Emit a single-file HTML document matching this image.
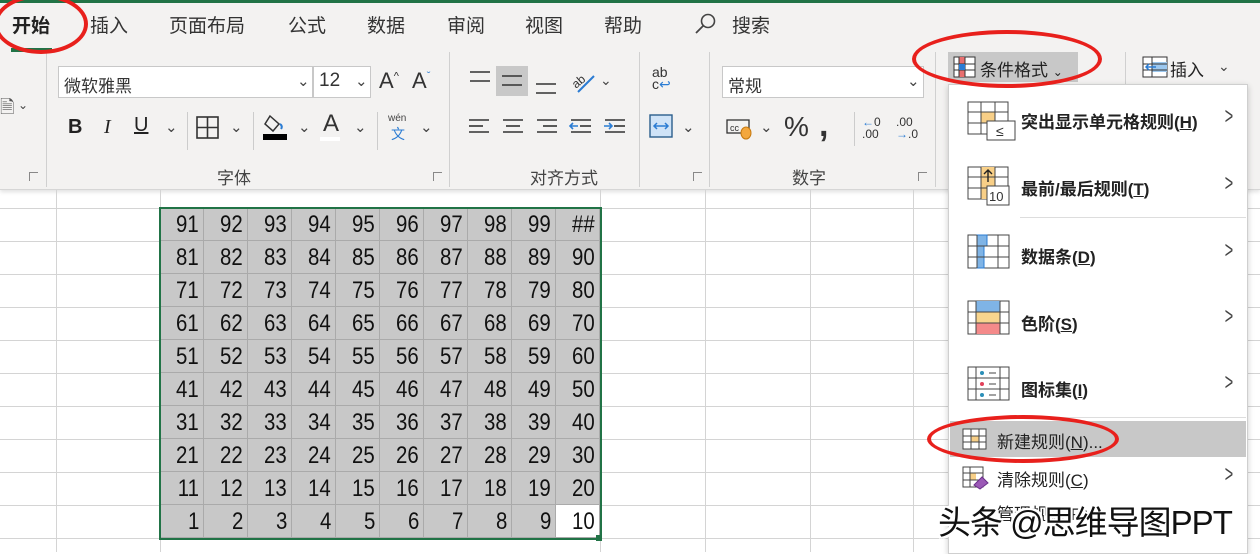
<!DOCTYPE html>
<html><head><meta charset="utf-8"><style>
*{margin:0;padding:0;box-sizing:border-box}
body{width:1260px;height:552px;overflow:hidden;background:#fff;position:relative;font-family:"Liberation Sans","Noto Sans CJK SC",sans-serif;color:#222}
.a{position:absolute;white-space:nowrap}
.rib{position:absolute;left:0;top:0;width:1260px;height:190px;background:#f3f2f1;border-bottom:1px solid #d6d6d6;box-shadow:0 2px 4px rgba(0,0,0,.12)}
.tab{position:absolute;top:11px;font-size:19px;color:#333}
.sep{position:absolute;top:52px;width:1px;height:135px;background:#d0d0d0}
.gl{position:absolute;top:164px;font-size:17px;color:#444}
.dl{position:absolute;top:172px;width:9px;height:9px;border-left:1px solid #888;border-top:1px solid #888}
.box{position:absolute;background:#fff;border:1px solid #c8c8c8;height:32px;font-size:17px;padding:5px 5px;color:#333}
.chev{position:absolute;font-size:12px;color:#444}
.vl{position:absolute;top:190px;width:1px;height:362px;background:#d4d4d4}
.hl{position:absolute;left:0;width:1260px;height:1px;background:#d4d4d4}
.cell{position:absolute;width:44px;height:33px;background:#c8c8c8;border-right:1px solid #aaa;border-bottom:1px solid #aaa;font-size:24px;text-align:right;padding-right:4px;line-height:33px;color:#111}
.cell span{display:inline-block;transform:scaleX(.85);transform-origin:right}
.menu{position:absolute;left:948px;top:84px;width:300px;height:470px;background:#fff;border:1px solid #cfcfcf;box-shadow:0 2px 6px rgba(0,0,0,.2)}
.mi{position:absolute;left:1021px;font-size:17px;font-weight:bold;color:#222}
.arr{position:absolute;left:1222px;font-size:24px;color:#444;transform:scaleX(.6)}
.ell{position:absolute;border:4px solid #e8201c;border-radius:50%}
</style></head><body>
<div class="rib"></div>
<div class="a" style="left:0;top:0;width:1260px;height:3px;background:#217346"></div>
<div class="tab" style="left:12px;font-weight:bold;color:#222">开始</div>
<div class="a" style="left:11px;top:48px;width:41px;height:4px;background:#217346"></div>
<div class="tab" style="left:90px">插入</div>
<div class="tab" style="left:169px">页面布局</div>
<div class="tab" style="left:288px">公式</div>
<div class="tab" style="left:367px">数据</div>
<div class="tab" style="left:447px">审阅</div>
<div class="tab" style="left:525px">视图</div>
<div class="tab" style="left:604px">帮助</div>
<svg class="a" style="left:694px;top:12px" width="24" height="24"><circle cx="14" cy="9" r="6.5" fill="none" stroke="#444" stroke-width="1.6"/><line x1="9.5" y1="13.5" x2="2" y2="21" stroke="#444" stroke-width="1.8"/></svg>
<div class="tab" style="left:732px">搜索</div>

<div class="sep" style="left:46px"></div><div class="sep" style="left:449px"></div><div class="sep" style="left:639px"></div><div class="sep" style="left:709px"></div><div class="sep" style="left:935px"></div><div class="sep" style="left:1125px"></div>
<div class="a" style="left:0;top:95px;font-size:18px;color:#555">🗎</div><div class="chev" style="left:18px;top:98px">⌄</div>
<div class="gl" style="left:217px">字体</div><div class="gl" style="left:530px">对齐方式</div><div class="gl" style="left:792px">数字</div>
<div class="dl" style="left:29px"></div><div class="dl" style="left:433px"></div><div class="dl" style="left:693px"></div><div class="dl" style="left:918px"></div>

<div class="box" style="left:58px;top:66px;width:255px">微软雅黑</div><div class="chev" style="left:297px;top:72px;font-size:15px">⌄</div>
<div class="box" style="left:313px;top:66px;width:58px;font-size:19px;padding-top:3px">12</div><div class="chev" style="left:355px;top:72px;font-size:15px">⌄</div>
<div class="a" style="left:379px;top:68px;font-size:22px;color:#333">A<sup style="font-size:11px">^</sup></div>
<div class="a" style="left:412px;top:68px;font-size:22px;color:#333">A<sup style="font-size:11px;color:#2b7cd3">ˇ</sup></div>
<div class="a" style="left:68px;top:116px;font-size:20px;font-weight:bold">B</div>
<div class="a" style="left:104px;top:116px;font-size:20px;font-style:italic;font-family:'Liberation Serif',serif">I</div>
<div class="a" style="left:134px;top:114px;font-size:20px;text-decoration:underline">U</div><div class="chev" style="left:165px;top:118px;font-size:15px">⌄</div>
<div class="a" style="left:187px;top:112px;width:1px;height:38px;background:#ccc"></div>
<svg class="a" style="left:196px;top:116px" width="24" height="24"><rect x="1" y="1" width="21" height="21" fill="none" stroke="#333" stroke-width="1.6"/><line x1="11.5" y1="1" x2="11.5" y2="22" stroke="#333" stroke-width="1.6"/><line x1="1" y1="11.5" x2="22" y2="11.5" stroke="#333" stroke-width="1.6"/></svg><div class="chev" style="left:230px;top:118px;font-size:15px">⌄</div>
<div class="a" style="left:253px;top:112px;width:1px;height:38px;background:#ccc"></div>
<svg class="a" style="left:262px;top:112px" width="28" height="30"><path d="M8 4 L17 12 L11 19 L3 12 Z" fill="none" stroke="#333" stroke-width="1.5"/><path d="M18 12 Q21 14 19 17" stroke="#2b7cd3" stroke-width="2" fill="none"/><rect x="1" y="22" width="24" height="6" fill="#000"/></svg><div class="chev" style="left:298px;top:118px;font-size:15px">⌄</div>
<div class="a" style="left:323px;top:110px;font-size:24px;color:#333">A</div><div class="a" style="left:320px;top:137px;width:20px;height:4px;background:#fff"></div><div class="chev" style="left:354px;top:118px;font-size:15px">⌄</div>
<div class="a" style="left:377px;top:112px;width:1px;height:38px;background:#ccc"></div>
<div class="a" style="left:388px;top:113px;font-size:10px;color:#444">wén</div><div class="a" style="left:391px;top:124px;font-size:14px;color:#2b7cd3">文</div><div class="chev" style="left:420px;top:118px;font-size:15px">⌄</div>

<svg class="a" style="left:466px;top:64px;width:170px;height:80px">
<g stroke="#333" stroke-width="1.6">
<rect x="30" y="2" width="32" height="30" fill="#c8c8c8" stroke="none"/>
<line x1="4" y1="8" x2="24" y2="8"/><line x1="4" y1="17" x2="24" y2="17"/>
<line x1="36" y1="12" x2="56" y2="12"/><line x1="36" y1="21" x2="56" y2="21"/>
<line x1="70" y1="20" x2="90" y2="20"/><line x1="70" y1="29" x2="90" y2="29"/>
<line x1="3" y1="56" x2="23" y2="56"/><line x1="3" y1="62" x2="17" y2="62"/><line x1="3" y1="68" x2="23" y2="68"/>
<line x1="37" y1="56" x2="57" y2="56"/><line x1="40" y1="62" x2="54" y2="62"/><line x1="37" y1="68" x2="57" y2="68"/>
<line x1="71" y1="56" x2="91" y2="56"/><line x1="77" y1="62" x2="91" y2="62"/><line x1="71" y1="68" x2="91" y2="68"/>
<line x1="105" y1="56" x2="125" y2="56"/><line x1="114" y1="62" x2="125" y2="62"/><line x1="105" y1="68" x2="125" y2="68"/>
<line x1="139" y1="56" x2="159" y2="56"/><line x1="148" y1="62" x2="159" y2="62"/><line x1="139" y1="68" x2="159" y2="68"/>
</g>
<path d="M104 62 h8 M107 59 l-3 3 3 3" stroke="#2b7cd3" stroke-width="1.6" fill="none"/>
<path d="M138 62 h8 M143 59 l3 3 -3 3" stroke="#2b7cd3" stroke-width="1.6" fill="none"/>
<text x="106" y="22" font-size="12" fill="#333" transform="rotate(-40 112 18)">ab</text>
<line x1="112" y1="28" x2="128" y2="12" stroke="#2b7cd3" stroke-width="2"/>
</svg><div class="chev" style="left:600px;top:72px;font-size:14px">⌄</div>
<div class="a" style="left:652px;top:66px;font-size:14px;line-height:12px;color:#333">ab<br>c<span style="color:#2b7cd3">↩</span></div>
<svg class="a" style="left:648px;top:113px" width="26" height="26"><rect x="2" y="2" width="22" height="22" fill="#cfe3f7" stroke="#2b5e8c" stroke-width="1.4"/><path d="M6 13h14M9 10l-3 3 3 3M17 10l3 3-3 3" stroke="#2b7cd3" stroke-width="1.5" fill="none"/></svg><div class="chev" style="left:682px;top:118px;font-size:15px">⌄</div>

<div class="box" style="left:722px;top:66px;width:202px">常规</div><div class="chev" style="left:907px;top:72px;font-size:15px">⌄</div>
<svg class="a" style="left:726px;top:117px" width="28" height="24"><rect x="1" y="3" width="22" height="13" fill="none" stroke="#333" stroke-width="1.3"/><text x="4" y="14" font-size="9" fill="#333">cc</text><ellipse cx="20" cy="16" rx="5" ry="6" fill="#f3a73d" stroke="#c77a10"/></svg><div class="chev" style="left:760px;top:118px;font-size:15px">⌄</div>
<div class="a" style="left:784px;top:111px;font-size:28px;color:#333">%</div>
<div class="a" style="left:819px;top:106px;font-size:34px;font-weight:bold;color:#333">,</div>
<div class="a" style="left:854px;top:112px;width:1px;height:34px;background:#ccc"></div>
<div class="a" style="left:862px;top:116px;font-size:12px;line-height:12px;color:#333"><span style="color:#2b7cd3">←</span>0<br>.00</div>
<div class="a" style="left:896px;top:116px;font-size:12px;line-height:12px;color:#333">.00<br><span style="color:#2b7cd3">→</span>.0</div>

<div class="a" style="left:948px;top:52px;width:130px;height:30px;background:#c8c8c8"></div>
<svg class="a" style="left:953px;top:56px" width="24" height="22"><rect x="1" y="1" width="21" height="20" fill="#fff" stroke="#333"/><rect x="6" y="1" width="6" height="20" fill="#e86f6f"/><path d="M1 8h21M1 14h21M6 1v20M12 1v20" stroke="#333" stroke-width="1"/><rect x="6" y="8" width="6" height="6" fill="#2b7cd3"/></svg>
<div class="a" style="left:980px;top:56px;font-size:17px;color:#222">条件格式 <span style="font-size:12px">⌄</span></div>
<svg class="a" style="left:1142px;top:56px" width="26" height="22"><rect x="1" y="1" width="24" height="20" fill="#fff" stroke="#333"/><rect x="10" y="6" width="15" height="10" fill="#9cc8ef"/><path d="M1 8h24M1 14h24M10 1v20" stroke="#333"/><path d="M4 11h10M7 8l-3 3 3 3" stroke="#2b7cd3" stroke-width="1.5" fill="none"/></svg>
<div class="a" style="left:1170px;top:56px;font-size:17px">插入</div><div class="chev" style="left:1218px;top:58px;font-size:14px">⌄</div>

<div class="vl" style="left:56px"></div><div class="vl" style="left:160px"></div><div class="vl" style="left:600px"></div><div class="vl" style="left:705px"></div><div class="vl" style="left:810px"></div><div class="vl" style="left:913px"></div>
<div class="hl" style="top:208px"></div><div class="hl" style="top:241px"></div><div class="hl" style="top:274px"></div><div class="hl" style="top:307px"></div><div class="hl" style="top:340px"></div><div class="hl" style="top:373px"></div><div class="hl" style="top:406px"></div><div class="hl" style="top:439px"></div><div class="hl" style="top:472px"></div><div class="hl" style="top:505px"></div><div class="hl" style="top:538px"></div>
<div id="g"></div>
<script>
var h='';for(var r=0;r<10;r++)for(var c=0;c<10;c++){var n=(9-r)*10+c+1;var t=(n==100)?'##':n;var bg=(n==10)?'background:#fff;':'';h+='<div class="cell" style="'+bg+'left:'+(160+c*44)+'px;top:'+(208+r*33)+'px"><span>'+t+'</span></div>';}
document.getElementById('g').innerHTML=h;
</script>
<div class="a" style="left:159px;top:207px;width:443px;height:333px;border:2px solid #217346"></div>
<div class="a" style="left:596px;top:535px;width:6px;height:6px;background:#217346"></div>

<div class="menu"></div>
<svg class="a" style="left:967px;top:101px" width="50" height="40"><rect x="1" y="1" width="40" height="32" fill="#fff" stroke="#444"/><rect x="14" y="11" width="14" height="11" fill="#f8cf87"/><path d="M1 11h40M1 22h40M14 1v32M28 1v32" stroke="#444"/><rect x="20" y="20" width="28" height="19" fill="#fff" stroke="#444"/><text x="29" y="35" font-size="14" fill="#333">≤</text></svg>
<div class="mi" style="top:108px">突出显示单元格规则(<u>H</u>)</div><div class="arr" style="top:103px">&gt;</div>
<svg class="a" style="left:967px;top:166px" width="50" height="40"><rect x="1" y="1" width="40" height="32" fill="#fff" stroke="#444"/><rect x="14" y="1" width="14" height="32" fill="#f8cf87"/><path d="M1 11h40M1 22h40M14 1v32M28 1v32" stroke="#444"/><path d="M21 16V4M17 8l4-4 4 4" stroke="#222" stroke-width="1.4" fill="none"/><rect x="20" y="20" width="22" height="19" fill="#fff" stroke="#444"/><text x="22" y="35" font-size="13" fill="#333">10</text></svg>
<div class="mi" style="top:175px">最前/最后规则(<u>T</u>)</div><div class="arr" style="top:170px">&gt;</div>
<div class="a" style="left:1020px;top:217px;width:226px;height:1px;background:#ddd"></div>
<svg class="a" style="left:967px;top:234px" width="45" height="36"><rect x="1" y="1" width="41" height="33" fill="#fff" stroke="#444"/><path d="M10 1h10v11h-3v11h-7z M10 23h7v11h-7z" fill="#7fb4e6" stroke="#2b7cd3"/><path d="M1 12h41M1 23h41M10 1v33M31 1v33" stroke="#444"/></svg>
<div class="mi" style="top:243px">数据条(<u>D</u>)</div><div class="arr" style="top:237px">&gt;</div>
<svg class="a" style="left:967px;top:300px" width="45" height="36"><rect x="1" y="1" width="41" height="33" fill="#fff" stroke="#444"/><rect x="9" y="1" width="24" height="11" fill="#7fb4e6"/><rect x="9" y="12" width="24" height="11" fill="#f8d58e"/><rect x="9" y="23" width="24" height="11" fill="#f48a8a"/><path d="M1 12h41M1 23h41M9 1v33M33 1v33" stroke="#444"/></svg>
<div class="mi" style="top:310px">色阶(<u>S</u>)</div><div class="arr" style="top:303px">&gt;</div>
<svg class="a" style="left:967px;top:366px" width="45" height="36"><rect x="1" y="1" width="41" height="33" fill="#fff" stroke="#444"/><path d="M1 12h41M1 23h41M9 1v33M33 1v33" stroke="#444"/><circle cx="15" cy="7" r="2" fill="#2b8fb8"/><circle cx="15" cy="18" r="2" fill="#e2405a"/><circle cx="15" cy="29" r="2" fill="#2b8fb8"/><path d="M22 7h7M22 18h7M22 29h7" stroke="#444"/></svg>
<div class="mi" style="top:376px">图标集(<u>I</u>)</div><div class="arr" style="top:369px">&gt;</div>
<div class="a" style="left:1020px;top:417px;width:226px;height:1px;background:#ddd"></div>
<div class="a" style="left:950px;top:421px;width:296px;height:36px;background:#c8c8c8"></div>
<svg class="a" style="left:962px;top:428px" width="26" height="22"><rect x="1" y="1" width="23" height="20" fill="#fff" stroke="#444"/><rect x="9" y="8" width="8" height="6" fill="#f8cf87"/><path d="M1 8h23M1 14h23M9 1v20M17 1v20" stroke="#444"/></svg>
<div class="a" style="left:997px;top:428px;font-size:17px;color:#222">新建规则(<u>N</u>)...</div>
<svg class="a" style="left:962px;top:466px" width="28" height="24"><rect x="1" y="1" width="20" height="20" fill="#fff" stroke="#444"/><rect x="8" y="7" width="6" height="7" fill="#f8cf87"/><path d="M1 7h20M1 14h20M8 1v20" stroke="#444"/><path d="M12 19l8-8 6 6-8 6z" fill="#9b59b6" stroke="#6b2f8a"/></svg>
<div class="a" style="left:997px;top:466px;font-size:17px;color:#222">清除规则(<u>C</u>)</div><div class="arr" style="top:461px">&gt;</div>
<div class="a" style="left:997px;top:500px;font-size:17px;color:#222">管理规则(R)...</div>
<div class="a" style="left:938px;top:496px;font-size:33px;color:#111;letter-spacing:-1px;text-shadow:-2px 0 #fff,2px 0 #fff,0 -2px #fff,0 2px #fff,-2px -2px #fff,2px 2px #fff,2px -2px #fff,-2px 2px #fff">头条 @思维导图PPT</div>

<div class="ell" style="left:-6px;top:-6px;width:94px;height:60px"></div>
<div class="ell" style="left:912px;top:30px;width:190px;height:58px"></div>
<div class="ell" style="left:927px;top:415px;width:192px;height:48px"></div>
</body></html>
